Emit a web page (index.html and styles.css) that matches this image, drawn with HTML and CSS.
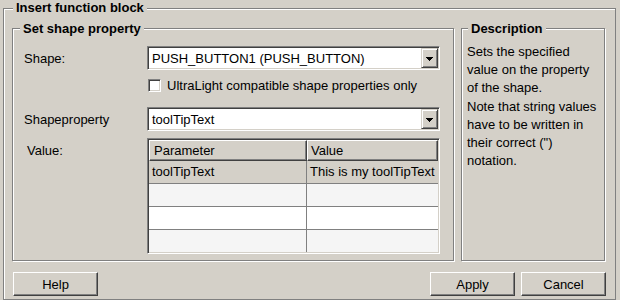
FILE: index.html
```html
<!DOCTYPE html>
<html lang="en">
<head>
    <meta charset="UTF-8">
    <meta name="viewport" content="width=device-width, initial-scale=1.0">
    <title>Insert function block</title>
    <link rel="stylesheet" href="styles.css">
</head>
<body>
    <div class="group outer">
        <div class="group-title">Insert function block</div>

        <div class="columns">
            <div class="group shape-group">
                <div class="group-title">Set shape property</div>

                <div class="form-row">
                    <label class="label">Shape:</label>
                    <div class="combo">
                        <span class="combo-text">PUSH_BUTTON1 (PUSH_BUTTON)</span>
                        <span class="combo-button">
                            <svg width="7" height="4" viewBox="0 0 7 4"><path d="M0 0h7v1H0zM1 1h5v1H1zM2 2h3v1H2zM3 3h1v1H3z" fill="#000"/></svg>
                        </span>
                    </div>
                </div>

                <div class="check-row">
                    <span class="checkbox"></span>
                    <span>UltraLight compatible shape properties only</span>
                </div>

                <div class="form-row second">
                    <label class="label">Shapeproperty</label>
                    <div class="combo">
                        <span class="combo-text">toolTipText</span>
                        <span class="combo-button">
                            <svg width="7" height="4" viewBox="0 0 7 4"><path d="M0 0h7v1H0zM1 1h5v1H1zM2 2h3v1H2zM3 3h1v1H3z" fill="#000"/></svg>
                        </span>
                    </div>
                </div>

                <div class="table-row">
                    <label class="label value-label">Value:</label>
                    <div class="table">
                        <div class="thead">
                            <div class="th th-param">Parameter</div>
                            <div class="th th-value">Value</div>
                        </div>
                        <div class="tr selected">
                            <div class="td td-param">toolTipText</div>
                            <div class="td">This is my toolTipText</div>
                        </div>
                        <div class="tr stripe">
                            <div class="td td-param"></div>
                            <div class="td"></div>
                        </div>
                        <div class="tr">
                            <div class="td td-param"></div>
                            <div class="td"></div>
                        </div>
                        <div class="tr stripe last">
                            <div class="td td-param"></div>
                            <div class="td"></div>
                        </div>
                    </div>
                </div>
            </div>

            <div class="group desc-group">
                <div class="group-title">Description</div>
                <p class="desc-text">
                    Sets the specified<br>
                    value on the property<br>
                    of the shape.<br>
                    Note that string values<br>
                    have to be written in<br>
                    their correct (")<br>
                    notation.
                </p>
            </div>
        </div>

        <div class="buttons">
            <button class="btn">Help</button>
            <button class="btn apply">Apply</button>
            <button class="btn">Cancel</button>
        </div>
    </div>
</body>
</html>
```

FILE: styles.css
```css
body {
    margin: 0;
    width: 620px;
    height: 300px;
    overflow: hidden;
    background: #d4d0c8;
    font-family: "Liberation Sans", Arial, sans-serif;
    font-size: 13px;
    color: #000;
}

/* etched group box */
.group {
    position: relative;
    box-sizing: border-box;
    border: 1px solid #808080;
    box-shadow: inset 1px 1px #fff, 1px 1px #fff;
}
.group-title {
    position: absolute;
    top: -8px;
    left: 7px;
    padding: 0 3px;
    background: #d4d0c8;
    font-weight: bold;
    line-height: 16px;
    white-space: nowrap;
}

.outer {
    width: 613px;
    height: 292px;
    margin: 8px 0 0 3px;
    padding: 19px 10px 0 8px;
    box-shadow: inset 1px 1px #fff;
}
.outer > .group-title {
    top: -9px;
    left: 9px;
}

.columns {
    display: flex;
    gap: 7px;
}

.shape-group {
    width: 442px;
    height: 233px;
    padding: 17px 13px 0 11px;
}

.form-row {
    display: flex;
    align-items: center;
    height: 24px;
}
.form-row.second {
    margin-top: 15px;
}
.label {
    flex: 0 0 123px;
    box-sizing: border-box;
}

/* sunken combo box */
.combo {
    display: flex;
    align-items: center;
    box-sizing: border-box;
    width: 293px;
    height: 24px;
    padding: 1px;
    background: #fff;
    border: 1px solid;
    border-color: #808080 #fff #fff #808080;
    box-shadow: inset 1px 1px #404040, inset -1px -1px #d4d0c8;
}
.combo-text {
    flex: 1;
    padding-left: 3px;
    white-space: nowrap;
}
.combo-button {
    display: flex;
    align-items: center;
    justify-content: center;
    box-sizing: border-box;
    width: 17px;
    height: 20px;
    background: #d4d0c8;
    border: 1px solid;
    border-color: #d4d0c8 #404040 #404040 #d4d0c8;
    box-shadow: inset 1px 1px #fff, inset -1px -1px #808080;
}
.combo-button svg {
    display: block;
    margin-top: 1px;
}

.check-row {
    display: flex;
    align-items: center;
    gap: 6px;
    height: 13px;
    margin: 9px 0 0 124px;
}
.checkbox {
    box-sizing: border-box;
    width: 13px;
    height: 13px;
    background: #fff;
    border: 1px solid;
    border-color: #808080 #fff #fff #808080;
    box-shadow: inset 1px 1px #404040, inset -1px -1px #d4d0c8;
}

.table-row {
    display: flex;
    margin-top: 7px;
}
.value-label {
    padding: 5px 0 0 3px;
    line-height: 16px;
}

/* property table */
.table {
    box-sizing: border-box;
    width: 293px;
    height: 116px;
    padding: 1px;
    background: #fff;
    border: 1px solid;
    border-color: #808080 #fff #fff #808080;
    box-shadow: inset 1px 1px #404040, inset -1px -1px #d4d0c8;
}
.thead {
    display: flex;
    height: 21px;
}
.th {
    box-sizing: border-box;
    height: 21px;
    line-height: 19px;
    background: #d4d0c8;
    border: 1px solid;
    border-color: #fff #404040 #404040 #fff;
    box-shadow: inset -1px -1px #808080;
}
.th-param {
    width: 158px;
    padding-left: 4px;
}
.th-value {
    width: 131px;
    padding-left: 3px;
}
.tr {
    display: flex;
    box-sizing: border-box;
    height: 23px;
    border-bottom: 1px solid #808080;
    background: #fff;
}
.tr.selected { background: #d4d0c8; }
.tr.stripe { background: #f5f5f5; }
.tr.last {
    height: 22px;
    border-bottom: none;
}
.td {
    flex: 1;
    padding-left: 3px;
    line-height: 22px;
    white-space: nowrap;
}
.td-param {
    flex: 0 0 158px;
    box-sizing: border-box;
    border-right: 1px solid #808080;
}

.desc-group {
    width: 144px;
    height: 233px;
    padding: 14px 0 0 5px;
}
.desc-group .group-title {
    left: 6px;
}
.desc-text {
    margin: 0;
    line-height: 18.2px;
    white-space: nowrap;
}

.buttons {
    display: flex;
    gap: 6px;
    margin: 11px -1px 0 1px;
}
.btn {
    box-sizing: border-box;
    width: 85px;
    height: 24px;
    padding: 0;
    background: #d4d0c8;
    font-family: inherit;
    font-size: 13px;
    color: #000;
    border: 1px solid;
    border-color: #fff #404040 #404040 #fff;
    box-shadow: inset -1px -1px #808080;
    border-radius: 0;
}
.apply {
    margin-left: auto;
}
```
